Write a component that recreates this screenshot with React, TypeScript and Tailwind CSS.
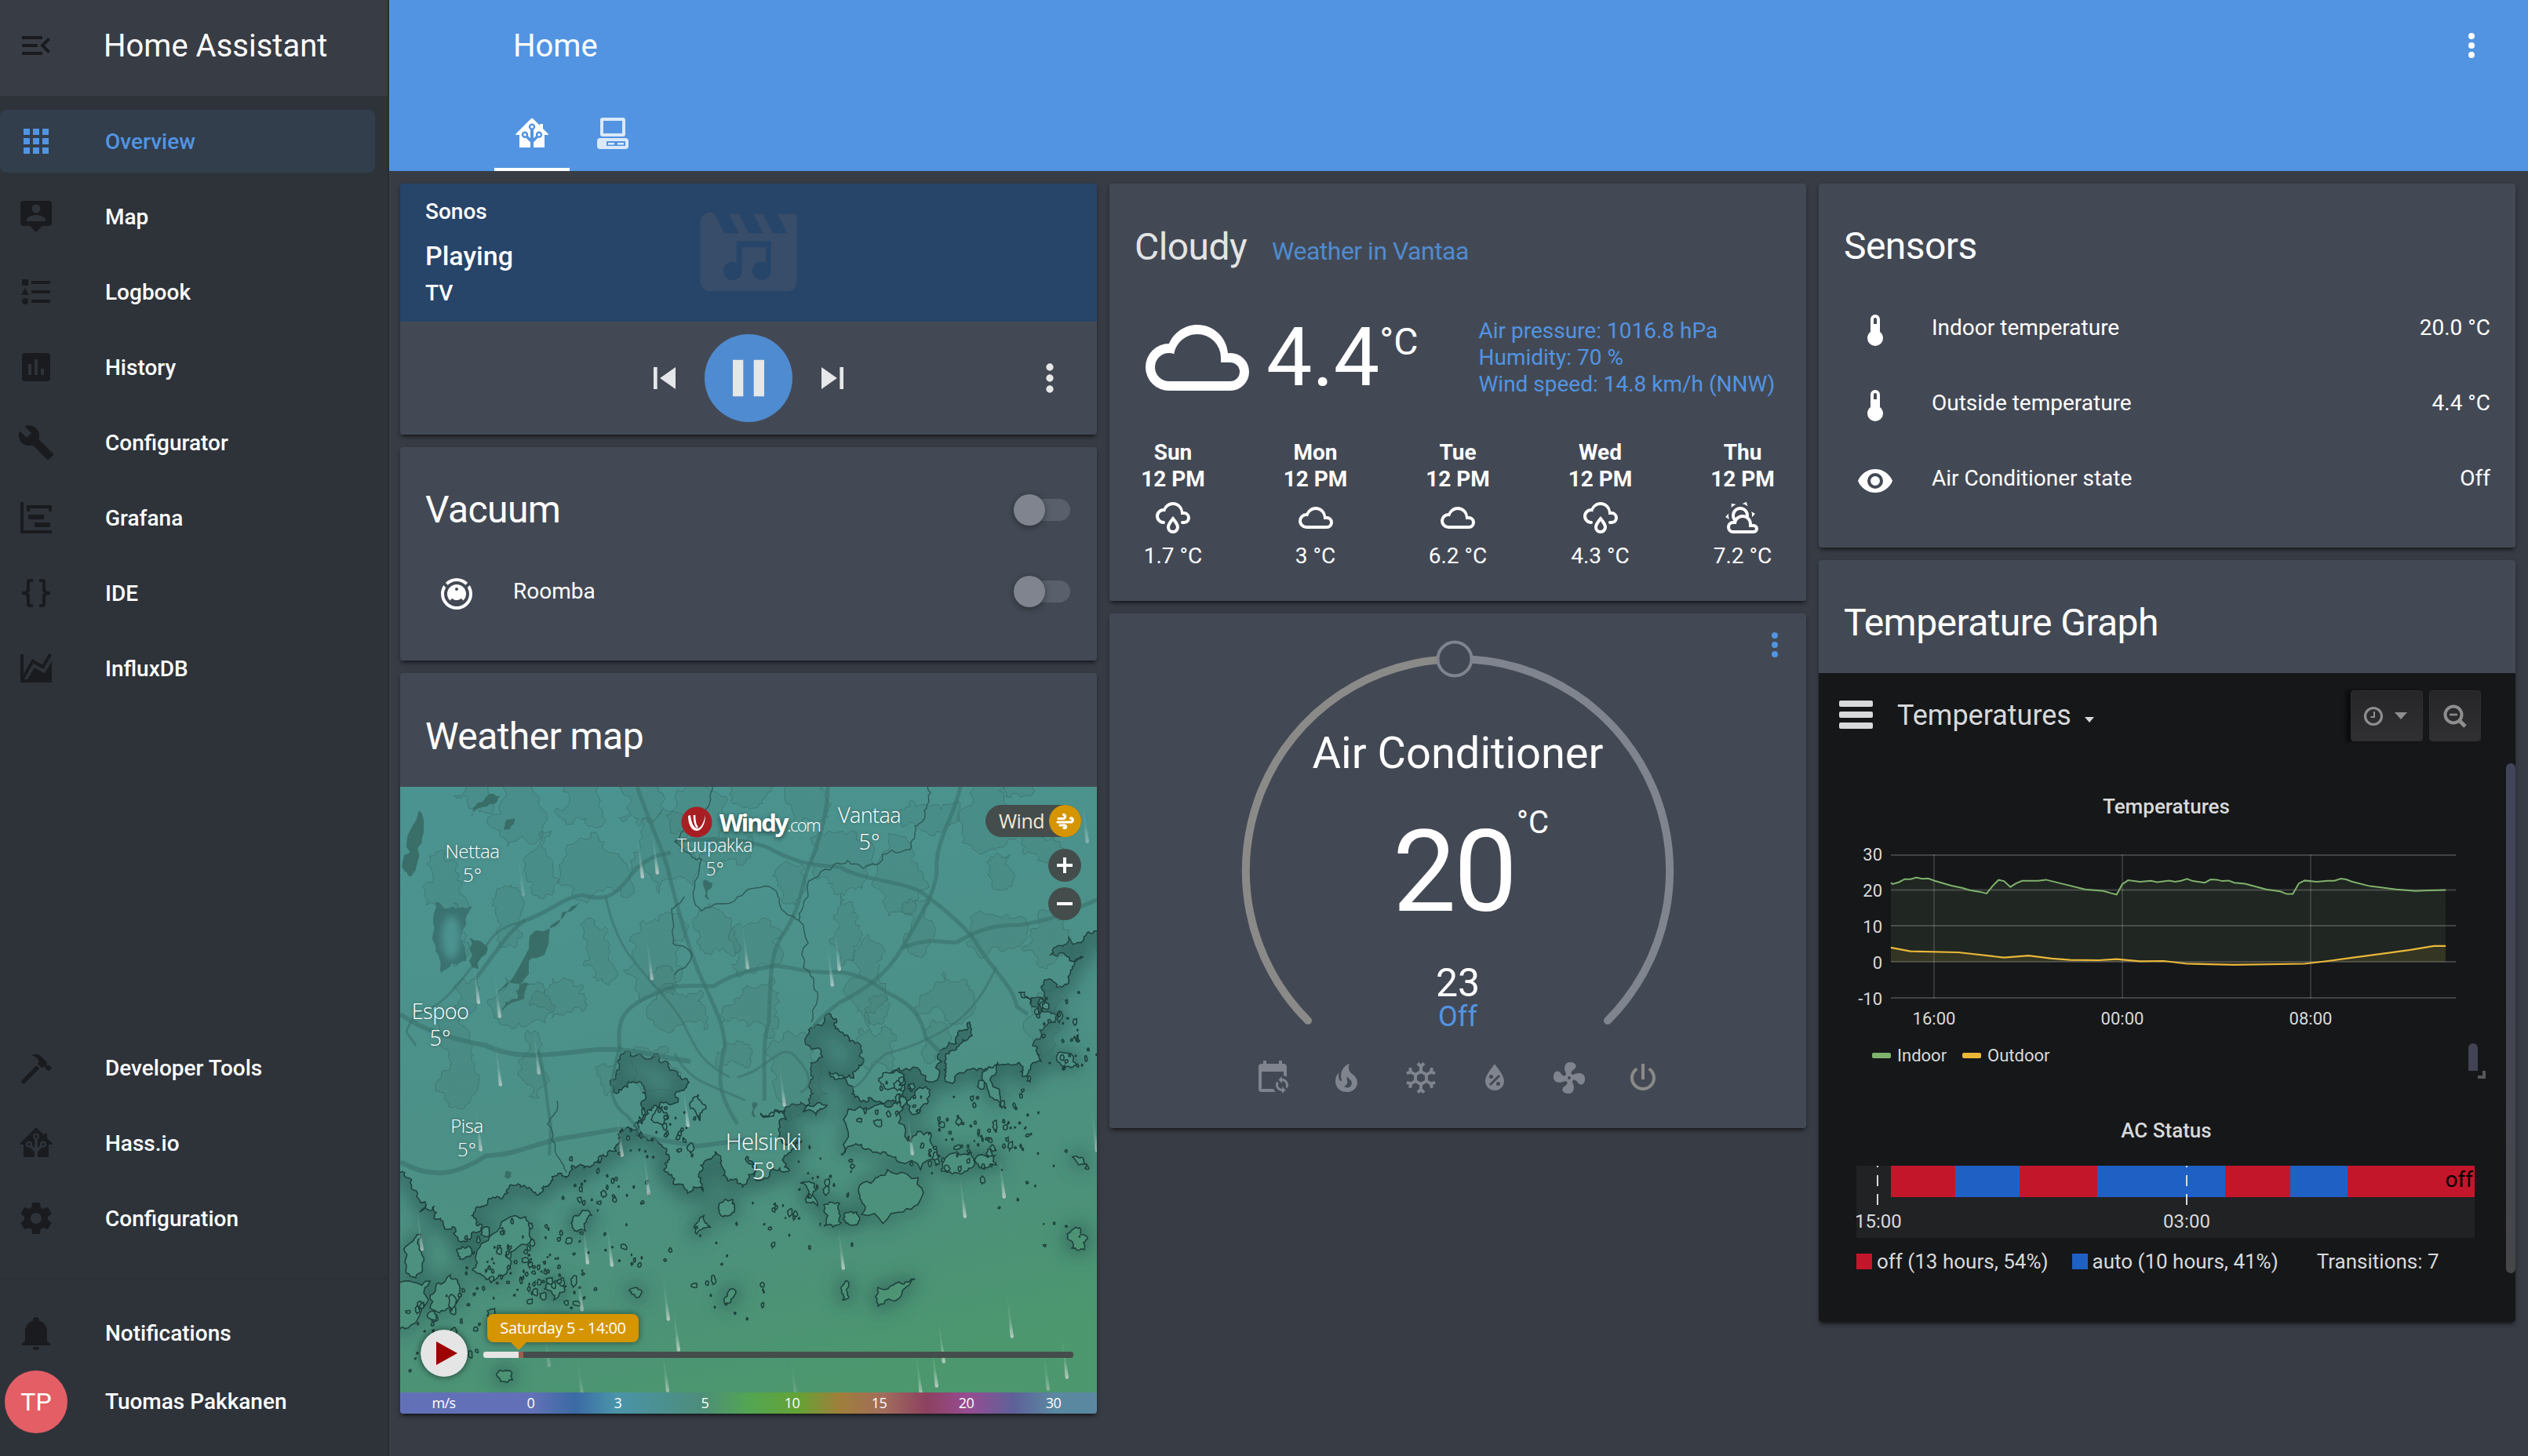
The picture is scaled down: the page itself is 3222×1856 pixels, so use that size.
import React from "react";

const P = {
  menuOpen: "M21,15.61L19.59,17L14.58,12L19.59,7L21,8.39L17.44,12L21,15.61M3,6H16V8H3V6M3,13V11H13V13H3M3,18V16H16V18H3Z",
  apps: "M16,20H20V16H16M16,14H20V10H16M10,8H14V4H10M16,8H20V4H16M10,14H14V10H10M4,14H8V10H4M4,20H8V16H4M10,20H14V16H10M4,8H8V4H4V8Z",
  map: "M20,2H4A2,2 0 0,0 2,4V16A2,2 0 0,0 4,18H8L12,22L16,18H20A2,2 0 0,0 22,16V4A2,2 0 0,0 20,2M12,4.3C13.5,4.3 14.7,5.5 14.7,7C14.7,8.5 13.5,9.7 12,9.7C10.5,9.7 9.3,8.5 9.3,7C9.3,5.5 10.5,4.3 12,4.3M18,15H6V14.1C6,12.1 10,11 12,11C14,11 18,12.1 18,14.1V15Z",
  logbook: "M5,9.5L7.5,14H2.5L5,9.5M3,4H7V8H3V4M5,20A2,2 0 0,0 7,18A2,2 0 0,0 5,16A2,2 0 0,0 3,18A2,2 0 0,0 5,20M9,5V7H21V5H9M9,19H21V17H9V19M9,13H21V11H9V13Z",
  history: "M9,17H7V10H9M13,17H11V7H13M17,17H15V13H17M19,3H5C3.89,3 3,3.89 3,5V19A2,2 0 0,0 5,21H19A2,2 0 0,0 21,19V5C21,3.89 20.1,3 19,3Z",
  wrench: "M22.7,19L13.6,9.9C14.5,7.6 14,4.9 12.1,3C10.1,1 7.1,0.6 4.7,1.7L9,6L6,9L1.6,4.7C0.4,7.1 0.9,10.1 2.9,12.1C4.8,14 7.5,14.5 9.8,13.6L18.9,22.7C19.3,23.1 19.9,23.1 20.3,22.7L22.6,20.4C23.1,20 23.1,19.3 22.7,19Z",
  timeline: "M2,2H4V20H22V22H2V2M7,10H17V13H7V10M11,15H21V18H11V15M6,4H22V8H20V6H8V8H6V4Z",
  braces: "M8,3A2,2 0 0,0 6,5V9A2,2 0 0,1 4,11H3V13H4A2,2 0 0,1 6,15V19A2,2 0 0,0 8,21H10V19H8V14A2,2 0 0,0 6,12A2,2 0 0,0 8,10V5H10V3M16,3A2,2 0 0,1 18,5V9A2,2 0 0,0 20,11H21V13H20A2,2 0 0,0 18,15V19A2,2 0 0,1 16,21H14V19H16V14A2,2 0 0,1 18,12A2,2 0 0,1 16,10V5H14V3H16Z",
  area: "M17.45,15.18L22,7.31V19L22,21H2V3H4V15.54L9.5,6L16,9.78L20.24,2.45L21.97,3.45L16.74,12.5L10.23,8.75L4.31,19H6.57L10.96,11.44L17.45,15.18Z",
  hammer: "M2.2,20.7L12.2,10.6L14.1,12.5L4.1,22.6L2.2,20.7M9.3,4.4C10.6,3.1 13,2.9 14.6,4.3L18.9,8.6L18.6,10.6L20.2,10.4L22,12.2L20,14.2L18,12.6V11.6L16.6,11.3L15.6,12.2L13,9.6L13.8,8.2C13.6,6.4 11.6,4.6 9.3,4.4Z",
  hass: "M21.8,13H20V21H13V17.67L15.79,14.88L16.5,15C17.66,15 18.6,14.06 18.6,12.9C18.6,11.74 17.66,10.8 16.5,10.8A2.1,2.1 0 0,0 14.4,12.9L14.5,13.61L13,15.13V9.65C13.66,9.29 14.1,8.6 14.1,7.8A2.1,2.1 0 0,0 12,5.7A2.1,2.1 0 0,0 9.9,7.8C9.9,8.6 10.34,9.29 11,9.65V15.13L9.5,13.61L9.6,12.9A2.1,2.1 0 0,0 7.5,10.8A2.1,2.1 0 0,0 5.4,12.9A2.1,2.1 0 0,0 7.5,15L8.21,14.88L11,17.67V21H4V13H2.25C1.83,13 1.42,13 1.42,12.79C1.43,12.57 1.85,12.15 2.28,11.72L11,3C11.33,2.67 11.67,2.33 12,2.33C12.33,2.33 12.67,2.67 13,3L17,7V6H19V9L21.78,11.78C22.18,12.18 22.59,12.59 22.6,12.8C22.6,13 22.2,13 21.8,13M7.5,12A0.9,0.9 0 0,1 8.4,12.9A0.9,0.9 0 0,1 7.5,13.8A0.9,0.9 0 0,1 6.6,12.9A0.9,0.9 0 0,1 7.5,12M16.5,12C17,12 17.4,12.4 17.4,12.9C17.4,13.4 17,13.8 16.5,13.8A0.9,0.9 0 0,1 15.6,12.9A0.9,0.9 0 0,1 16.5,12M12,6.9C12.5,6.9 12.9,7.3 12.9,7.8C12.9,8.3 12.5,8.7 12,8.7C11.5,8.7 11.1,8.3 11.1,7.8C11.1,7.3 11.5,6.9 12,6.9Z",
  cog: "M12,15.5A3.5,3.5 0 0,1 8.5,12A3.5,3.5 0 0,1 12,8.5A3.5,3.5 0 0,1 15.5,12A3.5,3.5 0 0,1 12,15.5M19.43,12.97C19.47,12.65 19.5,12.33 19.5,12C19.5,11.67 19.47,11.34 19.43,11L21.54,9.37C21.73,9.22 21.78,8.95 21.66,8.73L19.66,5.27C19.54,5.05 19.27,4.96 19.05,5.05L16.56,6.05C16.04,5.66 15.5,5.32 14.87,5.07L14.5,2.42C14.46,2.18 14.25,2 14,2H10C9.75,2 9.54,2.18 9.5,2.42L9.13,5.07C8.5,5.32 7.96,5.66 7.44,6.05L4.95,5.05C4.73,4.96 4.46,5.05 4.34,5.27L2.34,8.73C2.21,8.95 2.27,9.22 2.46,9.37L4.57,11C4.53,11.34 4.5,11.67 4.5,12C4.5,12.33 4.53,12.65 4.57,12.97L2.46,14.63C2.27,14.78 2.21,15.05 2.34,15.27L4.34,18.73C4.46,18.95 4.73,19.03 4.95,18.95L7.44,17.94C7.96,18.34 8.5,18.68 9.13,18.93L9.5,21.58C9.54,21.82 9.75,22 10,22H14C14.25,22 14.46,21.82 14.5,21.58L14.87,18.93C15.5,18.67 16.04,18.34 16.56,17.94L19.05,18.95C19.27,19.03 19.54,18.95 19.66,18.73L21.66,15.27C21.78,15.05 21.73,14.78 21.54,14.63L19.43,12.97Z",
  bell: "M21,19V20H3V19L5,17V11C5,7.9 7.03,5.17 10,4.29C10,4.19 10,4.1 10,4A2,2 0 0,1 12,2A2,2 0 0,1 14,4C14,4.1 14,4.19 14,4.29C16.97,5.17 19,7.9 19,11V17L21,19M14,21A2,2 0 0,1 12,23A2,2 0 0,1 10,21",
  dots: "M12,16A2,2 0 0,1 14,18A2,2 0 0,1 12,20A2,2 0 0,1 10,18A2,2 0 0,1 12,16M12,10A2,2 0 0,1 14,12A2,2 0 0,1 12,14A2,2 0 0,1 10,12A2,2 0 0,1 12,10M12,4A2,2 0 0,1 14,6A2,2 0 0,1 12,8A2,2 0 0,1 10,6A2,2 0 0,1 12,4Z",
  prev: "M6 6h2v12H6zm3.5 6l8.5 6V6z",
  next: "M6 18l8.5-6L6 6v12zM16 6v12h2V6h-2z",
  pause: "M6 19h4V5H6v14zm8-14v14h4V5h-4z",
  vacuum: "M12,2C14.65,2 17.19,3.06 19.07,4.93L17.65,6.35C16.15,4.85 14.12,4 12,4C9.88,4 7.84,4.84 6.35,6.35L4.93,4.93C6.81,3.06 9.35,2 12,2M3.66,6.5L5.11,7.94C4.39,9.17 4,10.57 4,12A8,8 0 0,0 12,20A8,8 0 0,0 20,12C20,10.57 19.61,9.17 18.88,7.94L20.34,6.5C21.42,8.12 22,10.04 22,12A10,10 0 0,1 12,22A10,10 0 0,1 2,12C2,10.04 2.58,8.12 3.66,6.5M12,6A6,6 0 0,1 18,12C18,13.59 17.37,15.12 16.24,16.24L14.83,14.83C14.08,15.58 13.06,16 12,16C10.94,16 9.92,15.58 9.17,14.83L7.76,16.24C6.63,15.12 6,13.59 6,12A6,6 0 0,1 12,6M12,8A1,1 0 0,0 11,9A1,1 0 0,0 12,10A1,1 0 0,0 13,9A1,1 0 0,0 12,8Z",
  cloudy: "M6,19A5,5 0 0,1 1,14A5,5 0 0,1 6,9C7,6.65 9.3,5 12,5C15.43,5 18.24,7.66 18.5,11.03L19,11A4,4 0 0,1 23,15A4,4 0 0,1 19,19H6M19,13H17V12A5,5 0 0,0 12,7C9.5,7 7.45,8.82 7.06,11.19C6.73,11.07 6.37,11 6,11A3,3 0 0,0 3,14A3,3 0 0,0 6,17H19A2,2 0 0,0 21,15A2,2 0 0,0 19,13Z",
  rainy: "M6,14.03A1,1 0 0,1 7,15.03C7,15.58 6.55,16.03 6,16.03C3.24,16.03 1,13.79 1,11.03C1,8.27 3.24,6.03 6,6.03C7,3.68 9.3,2.03 12,2.03C15.43,2.03 18.24,4.69 18.5,8.06L19,8.03A4,4 0 0,1 23,12.03C23,14.23 21.21,16.03 19,16.03H18C17.45,16.03 17,15.58 17,15.03C17,14.47 17.45,14.03 18,14.03H19A2,2 0 0,0 21,12.03A2,2 0 0,0 19,10.03H17V9.03C17,6.27 14.76,4.03 12,4.03C9.5,4.03 7.45,5.84 7.06,8.21C6.73,8.09 6.37,8.03 6,8.03A3,3 0 0,0 3,11.03A3,3 0 0,0 6,14.03M12,14.15C12.18,14.39 12.37,14.66 12.56,14.94C13,15.56 14,17.03 14,18C14,19.11 13.1,20 12,20A2,2 0 0,1 10,18C10,17.03 11,15.56 11.44,14.94C11.63,14.66 11.82,14.4 12,14.15M12,11.03L11.5,11.59C11.5,11.59 10.65,12.55 9.79,13.81C8.93,15.06 8,16.56 8,18A4,4 0 0,0 12,22A4,4 0 0,0 16,18C16,16.56 15.07,15.06 14.21,13.81C13.35,12.55 12.5,11.59 12.5,11.59",
  partly: "M12.74,5.47C15.1,6.5 16.35,9.03 15.92,11.46C17.19,12.56 18,14.19 18,16V16.17C18.31,16.06 18.65,16 19,16A3,3 0 0,1 22,19A3,3 0 0,1 19,22H6A4,4 0 0,1 2,18A4,4 0 0,1 6,14H6.27C5,12.45 4.6,10.24 5.5,8.26C6.72,5.5 9.97,4.24 12.74,5.47M11.93,7.3C10.16,6.5 8.09,7.31 7.31,9.07C6.85,10.09 6.93,11.22 7.41,12.13C8.5,10.83 10.16,10 12,10C12.7,10 13.38,10.12 14,10.34C13.94,9.06 13.18,7.86 11.93,7.3M13.55,3.64C13,3.4 12.45,3.23 11.88,3.12L14.37,1.82L15.27,4.71C14.76,4.29 14.19,3.93 13.55,3.64M6.09,4.44C5.6,4.79 5.17,5.19 4.8,5.63L4.91,2.82L7.87,3.5C7.25,3.71 6.65,4.03 6.09,4.44M18,9.71C17.91,9.12 17.78,8.55 17.59,8L19.97,9.5L17.92,11.73C18.03,11.08 18.05,10.4 18,9.71M3.04,11.3C3.11,11.9 3.24,12.47 3.43,13L1.06,11.5L3.1,9.28C3,9.93 2.97,10.61 3.04,11.3M19,18H16V16A4,4 0 0,0 12,12A4,4 0 0,0 8,16H6A2,2 0 0,0 4,18A2,2 0 0,0 6,20H19A1,1 0 0,0 20,19A1,1 0 0,0 19,18Z",
  thermo: "M17,17A5,5 0 0,1 12,22A5,5 0 0,1 7,17C7,15.36 7.79,13.91 9,13V5A3,3 0 0,1 12,2A3,3 0 0,1 15,5V13C16.21,13.91 17,15.36 17,17M12,4A1,1 0 0,0 11,5V8H13V5A1,1 0 0,0 12,4Z",
  eye: "M12,9A3,3 0 0,0 9,12A3,3 0 0,0 12,15A3,3 0 0,0 15,12A3,3 0 0,0 12,9M12,17A5,5 0 0,1 7,12A5,5 0 0,1 12,7A5,5 0 0,1 17,12A5,5 0 0,1 12,17M12,4.5C7,4.5 2.73,7.61 1,12C2.73,16.39 7,19.5 12,19.5C17,19.5 21.27,16.39 23,12C21.27,7.61 17,4.5 12,4.5Z",
  fire: "M17.66 11.2C17.43 10.9 17.15 10.64 16.89 10.38C16.22 9.78 15.46 9.35 14.82 8.72C13.33 7.26 13 4.85 13.95 3C13 3.23 12.17 3.75 11.46 4.32C8.87 6.4 7.85 10.07 9.07 13.22C9.11 13.32 9.15 13.42 9.15 13.55C9.15 13.77 9 13.97 8.8 14.05C8.57 14.15 8.33 14.09 8.14 13.93C8.08 13.88 8.04 13.83 8 13.76C6.87 12.33 6.69 10.28 7.45 8.64C5.78 10 4.87 12.3 5 14.47C5.06 14.97 5.12 15.47 5.29 15.97C5.43 16.57 5.7 17.17 6 17.7C7.08 19.43 8.95 20.67 10.96 20.92C13.1 21.19 15.39 20.8 17.03 19.32C18.86 17.66 19.5 15 18.56 12.72L18.43 12.46C18.22 12 17.66 11.2 17.66 11.2M14.5 17.5C14.22 17.74 13.76 18 13.4 18.1C12.28 18.5 11.16 17.94 10.5 17.28C11.69 17 12.4 16.12 12.61 15.23C12.78 14.43 12.46 13.77 12.33 13C12.21 12.26 12.23 11.63 12.5 10.94C12.69 11.32 12.89 11.7 13.13 12C13.9 13 15.11 13.44 15.37 14.8C15.41 14.94 15.43 15.08 15.43 15.23C15.46 16.05 15.1 16.95 14.5 17.5H14.5Z",
  snow: "M20.79,13.95L18.46,14.57L16.46,13.44V10.56L18.46,9.43L20.79,10.05L21.31,8.12L19.54,7.65L20,5.88L18.07,5.36L17.45,7.69L15.45,8.82L13,7.38V5.12L14.71,3.41L13.29,2L12,3.29L10.71,2L9.29,3.41L11,5.12V7.38L8.5,8.82L6.5,7.69L5.92,5.36L4,5.88L4.47,7.65L2.7,8.12L3.22,10.05L5.55,9.43L7.55,10.56V13.45L5.55,14.58L3.22,13.96L2.7,15.89L4.47,16.36L4,18.12L5.93,18.64L6.55,16.31L8.55,15.18L11,16.62V18.88L9.29,20.59L10.71,22L12,20.71L13.29,22L14.7,20.59L13,18.88V16.62L15.5,15.17L17.5,16.3L18.12,18.63L20,18.12L19.53,16.35L21.3,15.88L20.79,13.95M9.5,10.56L12,9.11L14.5,10.56V13.44L12,14.89L9.5,13.44V10.56Z",
  humidity: "M12,3.25C12,3.25 6,10 6,14C6,17.32 8.69,20 12,20A6,6 0 0,0 18,14C18,10 12,3.25 12,3.25M14.47,9.97L15.53,11.03L9.53,17.03L8.47,15.97M9.75,10A1.25,1.25 0 0,1 11,11.25A1.25,1.25 0 0,1 9.75,12.5A1.25,1.25 0 0,1 8.5,11.25A1.25,1.25 0 0,1 9.75,10M14.25,14.5A1.25,1.25 0 0,1 15.5,15.75A1.25,1.25 0 0,1 14.25,17A1.25,1.25 0 0,1 13,15.75A1.25,1.25 0 0,1 14.25,14.5Z",
  fan: "M12,11A1,1 0 0,0 11,12A1,1 0 0,0 12,13A1,1 0 0,0 13,12A1,1 0 0,0 12,11M12.5,2C17,2 17.11,5.57 14.75,6.75C13.76,7.24 13.32,8.29 13.13,9.22C13.61,9.42 14.03,9.73 14.35,10.13C18.05,8.13 22.03,8.92 22.03,12.5C22.03,17 18.46,17.1 17.28,14.73C16.78,13.74 15.72,13.3 14.79,13.11C14.59,13.59 14.28,14 13.88,14.34C15.87,18.03 15.08,22 11.5,22C7,22 6.91,18.42 9.27,17.24C10.25,16.75 10.69,15.71 10.89,14.79C10.4,14.59 9.97,14.27 9.65,13.87C5.96,15.85 2,15.07 2,11.5C2,7 5.56,6.89 6.74,9.26C7.24,10.25 8.29,10.68 9.22,10.87C9.41,10.39 9.73,9.97 10.14,9.65C8.15,5.96 8.94,2 12.5,2Z",
  power: "M16.56,5.44L15.11,6.89C16.84,7.94 18,9.83 18,12A6,6 0 0,1 12,18A6,6 0 0,1 6,12C6,9.83 7.16,7.94 8.88,6.88L7.44,5.44C5.36,6.88 4,9.28 4,12A8,8 0 0,0 12,20A8,8 0 0,0 20,12C20,9.28 18.64,6.88 16.56,5.44M13,3H11V13H13",
  calSync: "M18,11V12.5C21.19,12.5 23.09,16.05 21.33,18.71L20.24,17.62C21.06,15.96 19.85,14 18,14V15.5L15.75,13.25L18,11M18,22V20.5C14.81,20.5 12.91,16.95 14.67,14.29L15.76,15.38C14.94,17.04 16.15,19 18,19V17.5L20.25,19.75L18,22M19,3H18V1H16V3H8V1H6V3H5A2,2 0 0,0 3,5V19A2,2 0 0,0 5,21H14C13.36,20.45 12.86,19.77 12.5,19H5V8H19V10.59C19.71,10.7 20.39,10.94 21,11.31V5A2,2 0 0,0 19,3Z",
};

function Icon({ d, className = "size-12" }: { d: string; className?: string }) {
  return (
    <svg viewBox="0 0 24 24" className={"shrink-0 fill-current " + className}>
      <path fillRule="evenodd" d={d} />
    </svg>
  );
}

/* ---------- sidebar ---------- */

function NavItem({ icon, label, active = false }: { icon: string; label: string; active?: boolean }) {
  return (
    <div
      className={
        "flex h-20 w-[478px] items-center gap-16 rounded-lg pl-[22px] text-[28px] font-medium " +
        (active ? "bg-[#323e4c] text-[#5294e2]" : "text-white")
      }
    >
      <span className={active ? "text-[#5294e2]" : "text-[#191b1e]"}>
        <Icon d={icon} />
      </span>
      <span className="pt-px">{label}</span>
    </div>
  );
}

function Sidebar() {
  return (
    <aside className="flex w-[496px] shrink-0 flex-col border-r-2 border-[#282c33] bg-[#2e333a]">
      <div className="flex h-[123px] items-center gap-[62px] border-b border-[#33373f] bg-[#383c45] pb-[6px] pl-[22px] text-[40px] text-white">
        <span className="text-[#191b1e]">
          <Icon d={P.menuOpen} />
        </span>
        <span className="pt-px">Home Assistant</span>
      </div>
      <nav className="mt-[17px] flex flex-col gap-4">
        <NavItem icon={P.apps} label="Overview" active />
        <NavItem icon={P.map} label="Map" />
        <NavItem icon={P.logbook} label="Logbook" />
        <NavItem icon={P.history} label="History" />
        <NavItem icon={P.wrench} label="Configurator" />
        <NavItem icon={P.timeline} label="Grafana" />
        <NavItem icon={P.braces} label="IDE" />
        <NavItem icon={P.area} label="InfluxDB" />
      </nav>
      <div className="grow" />
      <nav className="mb-9 flex flex-col gap-4">
        <NavItem icon={P.hammer} label="Developer Tools" />
        <NavItem icon={P.hass} label="Hass.io" />
        <NavItem icon={P.cog} label="Configuration" />
      </nav>
      <div className="h-0.5 bg-[#292d34]" />
      <div className="flex flex-col gap-2 pt-7 pb-[29px]">
        <NavItem icon={P.bell} label="Notifications" />
        <div className="flex h-20 items-center gap-12 pl-1.5 text-[28px] font-medium text-white">
          <span className="flex size-20 items-center justify-center rounded-full bg-[#e45e65] text-[32px] font-normal">TP</span>
          Tuomas Pakkanen
        </div>
      </div>
    </aside>
  );
}

/* ---------- cards ---------- */

function Card({ className = "", children }: { className?: string; children: React.ReactNode }) {
  return (
    <section
      className={
        "relative flex w-[888px] flex-col overflow-hidden rounded-[4px] bg-[#434954] shadow-[0_4px_4px_rgba(0,0,0,0.22),0_2px_10px_rgba(0,0,0,0.14),0_6px_2px_-4px_rgba(0,0,0,0.3)] " +
        className
      }
    >
      {children}
    </section>
  );
}

function MediaCard() {
  return (
    <Card className="h-[320px]">
      <div className="relative h-[176px] bg-[#274469] pt-[15px] pl-8 font-medium text-white">
        <div className="text-[28px] leading-[42px]">Sonos</div>
        <div className="mt-[12px] text-[34px] leading-[46px]">Playing</div>
        <div className="mt-[4px] text-[28px] leading-[42px]">TV</div>
        <svg viewBox="0 0 24 24" className="absolute top-[14px] left-[370px] size-[148px] fill-[#374d69]">
          <path
            fillRule="evenodd"
            d="M18,4L20,8H17L15,4H13L15,8H12L10,4H8L10,8H7L5,4A2,2 0 0,0 2,6V18A2,2 0 0,0 4,20H20A2,2 0 0,0 22,18V4H18M16.6,9.6V16A1.9,1.9 0 1,1 15.6,14.1V10.9H10.6V16A1.9,1.9 0 1,1 9.5,14.1V9.6H16.6Z"
          />
        </svg>
      </div>
      <div className="relative flex h-36 items-center justify-center gap-[23px] text-[#e6e7e9]">
        <Icon d={P.prev} className="size-14" />
        <span className="flex size-28 items-center justify-center rounded-full bg-[#4f8bd0]">
          <Icon d={P.pause} className="size-20" />
        </span>
        <Icon d={P.next} className="size-14" />
        <span className="absolute right-8">
          <Icon d={P.dots} className="size-14" />
        </span>
      </div>
    </Card>
  );
}

function Toggle() {
  return (
    <span className="flex h-7 w-[68px] items-center rounded-full bg-[#59606b]">
      <span className="-ml-1 size-10 rounded-full bg-[#7f848e] shadow-[0_2px_8px_rgba(0,0,0,0.4)]" />
    </span>
  );
}

function VacuumCard() {
  return (
    <Card className="h-[272px] text-white">
      <div className="flex h-40 items-center justify-between pr-[34px] pl-8 text-[48px] tracking-[-0.012em]">
        Vacuum
        <Toggle />
      </div>
      <div className="flex h-12 items-center pr-[34px] pl-12 text-[28px]">
        <span className="mt-1.5">
          <Icon d={P.vacuum} />
        </span>
        <span className="ml-12 grow">Roomba</span>
        <Toggle />
      </div>
    </Card>
  );
}

/* ---------- map ---------- */

type Pt = [number, number];

function rng(seed: number) {
  let s = seed;
  return () => {
    s = (s * 1664525 + 1013904223) % 4294967296;
    return s / 4294967296;
  };
}

function fractal(points: Pt[], seed: number, rough: number, depth: number, closed = true): string {
  const rand = rng(seed);
  let pts = closed ? [...points, points[0]] : points;
  for (let k = 0; k < depth; k++) {
    const out: Pt[] = [];
    for (let i = 0; i < pts.length - 1; i++) {
      const [x1, y1] = pts[i];
      const [x2, y2] = pts[i + 1];
      const off = (rand() - 0.5) * rough;
      out.push(pts[i], [(x1 + x2) / 2 - (y2 - y1) * off, (y1 + y2) / 2 + (x2 - x1) * off]);
    }
    out.push(pts[pts.length - 1]);
    pts = out;
  }
  return "M" + pts.map((p) => p[0].toFixed(1) + "," + p[1].toFixed(1)).join("L") + (closed ? "Z" : "");
}

function blob(cx: number, cy: number, rx: number, ry: number, seed: number): Pt[] {
  const rand = rng(seed);
  const n = 7;
  return Array.from({ length: n }, (_, i) => {
    const a = (i / n) * Math.PI * 2;
    const k = 0.6 + rand() * 0.6;
    return [cx + Math.cos(a) * rx * k, cy + Math.sin(a) * ry * k] as Pt;
  });
}

const COAST: Pt[] = [
  [930, 184], [888, 184], [852, 192], [829, 214], [870, 217], [852, 247], [820, 249], [823, 274], [788, 262],
  [829, 287], [835, 300], [806, 330], [817, 350], [803, 377], [794, 357], [770, 354], [741, 359], [694, 371], [694, 350],
  [715, 327], [726, 300], [709, 327], [690, 350], [640, 362], [618, 381], [641, 389], [606, 401], [577, 386], [547, 364],
  [583, 360], [580, 327], [559, 310], [541, 294], [521, 314], [523, 360], [527, 391], [521, 404], [495, 408], [459, 416],
  [492, 424], [490, 455], [512, 451], [489, 478], [495, 490], [452, 499], [442, 471], [436, 511], [412, 495], [401, 465],
  [392, 475], [386, 515], [366, 518], [336, 488], [339, 461], [301, 444], [307, 424], [330, 408], [362, 387], [354, 364],
  [324, 340], [301, 342], [275, 364], [276, 391], [311, 382], [311, 413], [298, 438], [280, 451], [263, 471], [242, 485],
  [216, 491], [192, 505], [178, 518], [145, 508], [128, 525], [96, 537], [104, 558], [78, 580], [55, 558], [43, 535],
  [25, 542], [8, 498], [-30, 480],
];

const ISLANDS: Pt[][] = [
  [[621, 488], [665, 512], [641, 542], [588, 545], [586, 521], [606, 498]],
  [[565, 424], [612, 404], [641, 404], [647, 451], [676, 441], [688, 471], [635, 478], [612, 468], [588, 456], [565, 468]],
  [[694, 474], [728, 466], [732, 482], [718, 492], [690, 490]],
  [[732, 476], [758, 470], [760, 482], [740, 486]],
  [[540, 533], [560, 531], [562, 556], [540, 560]],
  [[566, 545], [582, 542], [584, 554], [568, 556]],
  [[376, 568], [388, 546], [396, 562], [378, 570]],
  [[609, 662], [609, 638], [640, 634], [656, 627], [638, 650]],
  [[96, 600], [118, 570], [160, 548], [166, 580], [140, 612], [110, 628], [92, 616]],
  [[38, 664], [46, 634], [64, 622], [76, 640], [62, 664]],
  [[-4, 690], [-4, 636], [38, 630], [36, 654], [10, 690]],
  [[218, 556], [232, 540], [244, 546], [236, 566], [222, 566]],
  [[184, 640], [200, 630], [212, 636], [196, 654]],
  [[408, 530], [424, 526], [426, 542], [412, 548]],
  [[320, 424], [334, 408], [340, 416], [336, 430]],
  [[370, 410], [380, 392], [390, 410], [382, 426]],
  [[514, 414], [520, 406], [544, 406], [530, 418]],
  [[742, 364], [760, 354], [760, 384], [770, 404], [750, 388]],
  [[610, 372], [640, 365], [644, 376], [622, 386]],
  [[646, 400], [670, 382], [672, 404], [650, 414]],
  [[510, 505], [528, 506], [532, 534], [518, 530]],
  [[6, 606], [12, 582], [26, 570], [30, 600], [20, 626]],
  [[72, 590], [86, 586], [90, 598], [76, 602]],
  [[562, 640], [570, 630], [572, 650], [564, 654]],
  [[838, 341], [852, 340], [862, 354], [852, 356]],
  [[850, 570], [866, 562], [876, 574], [872, 590], [856, 588]],
  [[856, 472], [868, 472], [876, 482], [866, 482]],
  [[414, 660], [424, 640], [428, 645], [418, 658]],
  [[126, 744], [142, 746], [144, 756], [128, 758]],
  [[292, 642], [300, 638], [308, 644], [300, 650]],
];

const CLUSTERS: [number, number, number, number, number, number][] = [
  [150, 600, 90, 60, 60, 6], [60, 690, 70, 70, 45, 8], [200, 630, 60, 40, 34, 6], [330, 440, 70, 40, 40, 5],
  [260, 510, 70, 40, 30, 6], [470, 560, 130, 50, 22, 4], [760, 430, 90, 60, 60, 5], [700, 470, 80, 40, 30, 6],
  [540, 500, 60, 50, 20, 5], [820, 540, 70, 90, 12, 4], [420, 640, 60, 60, 14, 5], [640, 400, 60, 40, 24, 6],
  [856, 330, 40, 40, 24, 5], [280, 590, 80, 50, 16, 5], [830, 290, 40, 40, 16, 6],
];

const ROADS: { d: string; w: number }[] = [
  { w: 5, d: "M302,0C316,40 330,70 340,100C352,150 366,200 380,235C400,280 412,300 414,330C404,370 404,390 430,430" },
  { w: 5, d: "M96,245C116,220 140,180 160,170C190,160 210,140 232,138C262,146 272,140 290,118C310,90 330,86 345,84" },
  { w: 5, d: "M350,70C400,64 440,66 470,78C510,100 530,100 560,102C590,120 640,120 664,134C700,160 720,180 732,195C750,230 780,250 786,280L800,290" },
  { w: 5, d: "M545,0C545,40 530,80 518,108C510,140 506,160 490,185C470,210 472,250 470,300C460,330 466,370 464,400" },
  { w: 5, d: "M714,0C706,40 680,70 684,110C680,140 660,170 640,205C620,240 590,260 560,275C540,290 530,300 524,310" },
  { w: 6, d: "M0,290C30,310 60,320 110,330C150,350 200,340 240,336C290,330 330,345 370,350" },
  { w: 6, d: "M0,478C40,500 70,496 110,470C150,470 180,450 220,446L280,436L330,450L380,458L440,450" },
  { w: 5, d: "M280,336C276,300 280,280 330,262C350,250 380,254 400,254C420,240 450,232 480,228C510,232 520,238 560,236C590,240 604,250 620,262C650,276 664,290 670,320L690,340" },
  { w: 5, d: "M640,205C680,190 690,200 710,198C740,180 760,176 790,176C830,170 850,160 888,144" },
  { w: 3, d: "M262,140C268,170 280,200 296,220C320,250 350,280 360,300C376,330 380,350 420,370" },
  { w: 4, d: "M176,336C186,370 186,400 192,430L190,470" },
  { w: 4, d: "M280,330C270,370 260,400 290,420L306,440" },
  { w: 3, d: "M760,230C750,250 740,270 720,290C700,310 660,330 620,340C590,360 600,380 560,390" },
  { w: 3, d: "M20,330C10,310 0,320 20,290C60,280 80,240 100,220C120,180 130,180 160,170" },
  { w: 3, d: "M430,370C470,360 480,330 500,340C520,360 530,380 510,390" },
  { w: 3, d: "M350,340C370,380 400,380 440,400" },
];

const STREAKS: [number, number, number][] = [
  [309, 117, 1], [328, 112, 1], [157, 140, 0.35], [443, 233, 0.8], [560, 235, 0.9], [551, 255, 0.9], [321, 247, 0.8], [100, 277, 1],
  [127, 295, 0.9], [128, 382, 0.9], [177, 367, 0.8], [490, 408, 0.9], [367, 434, 0.9], [103, 465, 0.9], [283, 472, 0.9],
  [317, 521, 0.9], [653, 470, 0.9], [770, 525, 1], [720, 550, 1], [565, 616, 1], [270, 612, 1], [239, 609, 1], [342, 681, 1],
  [355, 720, 1], [780, 703, 1], [693, 735, 1], [684, 766, 1], [850, 755, 1], [232, 669, 0.8], [28, 592, 0.8], [341, 772, 0.8],
  [664, 776, 0.9], [190, 740, 0.4], [232, 776, 0.4], [826, 770, 0.6], [504, 776, 0.3], [876, 72, 0.6], [888, 466, 0.7],
];

const islandPaths = ISLANDS.map((p, i) => fractal(p, 31 + i * 7, 0.55, 3));
const isletPaths = CLUSTERS.flatMap(([cx, cy, rx, ry, n, r], c) => {
  const rand = rng(c * 991 + 5);
  return Array.from({ length: n }, (_, i) => {
    const x = cx + (rand() + rand() - 1) * rx;
    const y = cy + (rand() + rand() - 1) * ry;
    const s = 0.8 + rand() * rand() * r;
    return fractal(blob(x, y, s * (0.6 + rand() * 0.5), s * (0.7 + rand() * 0.8), i + 3), i + 9, 0.5, 1);
  });
});
const mainlandPath = fractal(COAST, 77, 0.75, 4, false) + "L-30,-30L930,-30Z";

const patchRand = rng(4242);
const patchPaths = Array.from({ length: 48 }, (_, i) => {
  const col = i % 10;
  const row = Math.floor(i / 10);
  const x = 60 + col * 84 + (patchRand() - 0.5) * 80;
  const y = 20 + row * 82 + (patchRand() - 0.5) * 60;
  return fractal(blob(x, y, 14 + patchRand() * 34, 16 + patchRand() * 46, i + 50), i + 60, 0.8, 3);
});

const LAKES: Pt[][] = [
  [[24, 30], [30, 50], [22, 78], [14, 114], [6, 108], [12, 84], [8, 74]],
  [[128, 12], [118, 22], [104, 26], [92, 42], [96, 24], [110, 12]],
  [[146, 40], [140, 54], [132, 54], [134, 44]],
  [[231, 145], [212, 160], [190, 186], [184, 214], [164, 222], [124, 262], [160, 214], [164, 200], [192, 180], [206, 160]],
  [[88, 192], [112, 206], [100, 232], [88, 222]],
  [[152, 252], [168, 250], [158, 270], [130, 286], [134, 274], [150, 270]],
  [[386, 120], [398, 122], [394, 144], [388, 140]],
  [[450, 402], [456, 404], [454, 422], [448, 418]],
  [[134, 490], [142, 492], [138, 500], [132, 498]],
];

const labelShadow = "[text-shadow:0_0_4px_rgba(0,0,0,0.35)]";

const LABELS: { name: string; x: number; y: number; y2: number; size: string }[] = [
  { name: "Nettaa", x: 92, y: 82, y2: 112, size: "text-[24px]" },
  { name: "Tuupakka", x: 401, y: 74, y2: 104, size: "text-[23px]" },
  { name: "Vantaa", x: 598, y: 36, y2: 70, size: "text-[27px]" },
  { name: "Espoo", x: 51, y: 286, y2: 320, size: "text-[27px]" },
  { name: "Pisa", x: 85, y: 432, y2: 462, size: "text-[24px]" },
  { name: "Helsinki", x: 463, y: 452, y2: 489, size: "text-[29px]" },
];

function WindMap() {
  return (
    <div className={'relative h-[772px] overflow-hidden font-["Open_Sans",sans-serif] text-white'}>
      <svg viewBox="0 0 888 772" className="block h-[772px] w-[888px]">
        <defs>
          <linearGradient id="base" gradientUnits="userSpaceOnUse" x1="300" y1="0" x2="480" y2="772">
            <stop offset="0" stopColor="#4b9390" />
            <stop offset="0.5" stopColor="#4c9087" />
            <stop offset="0.8" stopColor="#4c9179" />
            <stop offset="1" stopColor="#4c976e" />
          </linearGradient>
          <linearGradient id="streak" x1="0" y1="0" x2="0" y2="1">
            <stop offset="0" stopColor="#fff" stopOpacity="0" />
            <stop offset="0.6" stopColor="#d9e6e0" stopOpacity="0.16" />
            <stop offset="1" stopColor="#e6e0e2" stopOpacity="0.7" />
          </linearGradient>
          <filter id="soft" x="-20%" y="-20%" width="140%" height="140%">
            <feGaussianBlur stdDeviation="11" />
          </filter>
          <filter id="soft2" x="-50%" y="-50%" width="200%" height="200%">
            <feGaussianBlur stdDeviation="5" />
          </filter>
        </defs>
        <rect width="888" height="772" fill="url(#base)" />
        <g filter="url(#soft)" fill="none" stroke="#2d5f58" strokeOpacity="0.75" strokeWidth="20">
          <path d={mainlandPath} />
          {islandPaths.map((d, i) => (
            <path key={i} d={d} strokeWidth="11" />
          ))}
        </g>
        <path d={mainlandPath} fill="url(#base)" stroke="#1e3f3b" strokeWidth="1.5" />
        <g fill="#426f6c" fillOpacity="0.15" stroke="#35615d" strokeOpacity="0.5" strokeWidth="1">
          {patchPaths.map((d, i) => (
            <path key={i} d={d} />
          ))}
        </g>
        <g fill="none" stroke="#3a716c" strokeOpacity="0.6">
          {ROADS.map((r, i) => (
            <path key={i} d={r.d} strokeWidth={r.w} />
          ))}
        </g>
        <g fill="none" stroke="#2c5753" strokeWidth="1.3">
          <path d={fractal([[398, 0], [388, 30], [350, 70], [362, 82], [384, 92], [376, 150], [384, 158], [430, 140], [470, 127], [484, 150], [508, 170], [514, 230], [532, 262], [524, 300]], 5, 0.35, 3, false)} />
          <path d={fractal([[672, 0], [668, 30], [656, 50], [650, 80], [610, 98], [590, 104], [570, 94], [548, 106], [520, 140], [508, 170]], 8, 0.45, 3, false)} />
          <path d={fractal([[362, 140], [346, 156], [348, 200], [372, 214], [350, 240]], 12, 0.3, 3, false)} />
          <path d={fractal([[200, 400], [188, 430], [200, 470], [212, 492]], 14, 0.4, 3, false)} />
        </g>
        <g fill="#35655f" fillOpacity="0.8">
          {LAKES.map((p, i) => (
            <path key={i} d={fractal(p, i + 100, 0.5, 2)} />
          ))}
        </g>
        <path d={fractal([[45, 147], [58, 155], [92, 152], [84, 175], [80, 200], [84, 222], [52, 237], [44, 200]], 3, 0.4, 3)} fill="#3a7270" />
        <ellipse cx="65" cy="192" rx="12" ry="28" fill="#4b9390" filter="url(#soft2)" />
        <g fill="url(#base)" stroke="#1e3f3b" strokeWidth="1.5">
          {islandPaths.map((d, i) => (
            <path key={i} d={d} />
          ))}
          {isletPaths.map((d, i) => (
            <path key={"i" + i} d={d} />
          ))}
        </g>
        <g fill="url(#streak)">
          {STREAKS.map(([x, y, o], i) => (
            <path key={i} opacity={o} d={`M${x - 7},${y - 58}L${x + 2},${y - 3}A2.200,2.200 0 0,1 ${x - 2.4},${y - 2}Z`} />
          ))}
        </g>
      </svg>

      {LABELS.map((l) => (
        <React.Fragment key={l.name}>
          <span
            className={"absolute -translate-x-1/2 -translate-y-1/2 font-light whitespace-nowrap tracking-[-0.02em] " + labelShadow + " " + l.size}
            style={{ left: l.x, top: l.y }}
          >
            {l.name}
          </span>
          <span
            className={"absolute -translate-x-1/2 -translate-y-1/2 font-light " + labelShadow + " " + l.size}
            style={{ left: l.x, top: l.y2 }}
          >
            5°
          </span>
        </React.Fragment>
      ))}

      <div className="absolute top-[22px] left-[358px] flex items-center">
        <svg viewBox="0 0 40 40" className="size-10">
          <circle cx="20" cy="20" r="19.5" fill="#a81e22" />
          <path d="M9,12C9,22 13,31 20,31C26,31 31,23 31,11C29,21 25,28 21,28C16,28 13,20 12,11Z" fill="#fff" />
          <path d="M17,11C17,18 18,24 21,27" fill="none" stroke="#fff" strokeWidth="2.6" />
        </svg>
        <span className="ml-[9px] text-[31px] leading-10 font-bold tracking-[-0.07em] [text-shadow:0_2px_6px_rgba(0,0,0,0.6)]">Windy</span>
        <span className="mt-1.5 text-[22px] leading-10 font-light tracking-[-0.07em]">.com</span>
      </div>

      <div className="absolute top-[23px] right-5 flex h-[41px] w-[122px] items-center justify-between rounded-full bg-[#444d4b] pl-[17px]">
        <span className="text-[25px] tracking-[-0.02em] text-[#f5ead6]">Wind</span>
        <svg viewBox="0 0 41 41" className="size-[41px]">
          <circle cx="20.5" cy="20.5" r="20.5" fill="#d49500" />
          <g fill="none" stroke="#fff" strokeWidth="3.2" strokeLinecap="round">
            <path d="M12,17.500H18C21,17.500 21.500,13 18.500,12.500M11,22H27C31.500,22 31,16 27.500,17M14,26H20C22.500,26.500 22,30 19,29.500" />
          </g>
        </svg>
      </div>
      <div className="absolute top-[79px] right-5 flex flex-col gap-[7px]">
        {["M21,11V31M11,21H31", "M11,21H31"].map((d) => (
          <svg key={d} viewBox="0 0 42 42" className="size-[42px]">
            <circle cx="21" cy="21" r="21" fill="#444d4b" />
            <path d={d} stroke="#fff" strokeWidth="4" />
          </svg>
        ))}
      </div>

      <div className="absolute top-[672px] left-[111px] flex h-[36px] w-[193px] items-center justify-center rounded-[8px] bg-[#d49500] text-[20px] tracking-[-0.02em] shadow-[0_0_8px_rgba(0,0,0,0.5)]">
        Saturday 5 - 14:00
        <svg viewBox="0 0 20 10" className="absolute top-[36px] left-[30px] h-2.5 w-5 fill-[#d49500]">
          <path d="M0,0H20L10,10Z" />
        </svg>
      </div>
      <div className="absolute top-[720px] left-[106px] flex h-2 w-[752px] overflow-hidden rounded-[3px] bg-[#444d4b]">
        <span className="w-[45px] bg-[#e5e5e5]" />
        <span className="w-[6px] bg-[#9b5f50]" />
      </div>
      <svg viewBox="0 0 60 60" className="absolute top-[692px] left-[26px] size-[60px] rounded-full shadow-[0_0_8px_rgba(0,0,0,0.6)]">
        <circle cx="30" cy="30" r="30" fill="#e5e5e5" />
        <path d="M20,15V45L47,30Z" fill="#9d0300" />
      </svg>
    </div>
  );
}

function MapCard() {
  return (
    <Card className="h-[944px]">
      <div className="flex h-[145px] items-center pt-4 pl-8 text-[48px] tracking-[-0.012em] text-white">Weather map</div>
      <WindMap />
      <div className='grid h-[27px] grid-cols-8 bg-[linear-gradient(90deg,#6271b7_19%,#3b6aa5_25%,#4a94a9_31%,#4d8d7b_43%,#53a553_50%,#63a335_57%,#9f7f3a_63%,#a16c5c_69.500%,#8d4160_75.500%,#974c92_81.500%,#5e6199_88%,#5b88a1_94%)] text-center font-["Open_Sans",sans-serif] text-[18px] leading-[27px] tracking-[-0.03em] text-white'>
        {["m/s", "0", "3", "5", "10", "15", "20", "30"].map((t) => (
          <span key={t}>{t}</span>
        ))}
      </div>
    </Card>
  );
}

/* ---------- weather ---------- */

function WeatherCard() {
  const days: [string, string, string][] = [
    ["Sun", P.rainy, "1.7 °C"],
    ["Mon", P.cloudy, "3 °C"],
    ["Tue", P.cloudy, "6.2 °C"],
    ["Wed", P.rainy, "4.3 °C"],
    ["Thu", P.partly, "7.2 °C"],
  ];
  return (
    <Card className="h-[532px] text-white">
      <div className="mt-[41px] flex h-[80px] items-baseline gap-8 pl-8 leading-[80px]">
        <span className="text-[48px] tracking-[-0.012em] text-[#e3e4e5]">Cloudy</span>
        <span className="text-[32px] tracking-[-0.016em] text-[#4f8bd0]">Weather in Vantaa</span>
      </div>
      <div className="mt-[29px] flex h-36 items-center pl-[40px]">
        <Icon d={P.cloudy} className="size-36" />
        <span className="ml-[16px] text-[104px] leading-none">4.4</span>
        <span className="mb-[40px] text-[48px] leading-none">°C</span>
        <div className="ml-[77px] text-[28px] leading-[34px] whitespace-nowrap text-[#5294e2]">
          <div>Air pressure: 1016.8 hPa</div>
          <div>Humidity: 70 %</div>
          <div>Wind speed: 14.8 km/h (NNW)</div>
        </div>
      </div>
      <div className="mt-[32px] flex justify-between px-[40px] text-center text-[28px] leading-[34px]">
        {days.map(([d, icon, t]) => (
          <div key={d} className="flex w-[82px] flex-col items-center whitespace-nowrap">
            <span className="font-bold">{d}</span>
            <span className="font-bold">12 PM</span>
            <span className="my-[8px]">
              <Icon d={icon} />
            </span>
            <span>{t}</span>
          </div>
        ))}
      </div>
    </Card>
  );
}

function ClimateCard() {
  const modes = [P.calSync, P.fire, P.snow, P.humidity, P.fan, P.power];
  return (
    <Card className="h-[656px] text-white">
      <svg viewBox="0 0 888 656" className="absolute inset-0 size-full">
        <g fill="none" strokeWidth="10" strokeLinecap="round">
          <path d="M253,519A270,270 0 0,1 444,58" stroke="#8a8a88" />
          <path d="M444,58A270,270 0 0,1 635,519" stroke="#7f848e" />
        </g>
        <circle cx="440" cy="58" r="21.500" fill="#434954" stroke="#7f848e" strokeWidth="4" />
      </svg>
      <span className="absolute top-4 right-4 text-[#5294e2]">
        <Icon d={P.dots} />
      </span>
      <div className="relative flex flex-col items-center">
        <div className="mt-[144px] text-[56px] leading-[68px]">Air Conditioner</div>
        <div className="relative mt-[28px] -ml-[10px] text-[144px] leading-[180px] tracking-[-0.02em]">
          20
          <span className="absolute top-[-13px] left-full ml-0.5 text-[40px] leading-[80px] tracking-normal">°C</span>
        </div>
        <div className="mt-[26px] text-[50px] leading-[50px]">23</div>
        <div className="text-[36px] leading-[36px] text-[#5294e2]">Off</div>
        <div className="mt-[36px] flex gap-[46.500px] text-[#7f848e]">
          {modes.map((m, i) => (
            <span key={i} className={i === 5 ? "text-[#8a8a88]" : ""}>
              <Icon d={m} />
            </span>
          ))}
        </div>
      </div>
    </Card>
  );
}

/* ---------- sensors ---------- */

function SensorsCard() {
  const rows: [string, string, string][] = [
    [P.thermo, "Indoor temperature", "20.0 °C"],
    [P.thermo, "Outside temperature", "4.4 °C"],
    [P.eye, "Air Conditioner state", "Off"],
  ];
  return (
    <Card className="h-[464px] text-white">
      <div className="flex h-40 items-center pl-8 text-[48px] tracking-[-0.012em]">Sensors</div>
      <div className="-mt-4 flex flex-col gap-4">
        {rows.map(([icon, name, value]) => (
          <div key={name} className="flex h-20 items-center pr-8 pl-12 text-[28px]">
            <span className="mt-1.5">
              <Icon d={icon} />
            </span>
            <span className="ml-12 grow">{name}</span>
            <span>{value}</span>
          </div>
        ))}
      </div>
    </Card>
  );
}

/* ---------- grafana panel ---------- */

const INDOOR =
  "172,828 176,833 190,826 202,815 215,815 228,809 241,814 254,812 268,821 305,839 328,847 345,856 368,862 382,868 395,840 408,818 420,822 434,844 446,831 460,821 495,821 512,817 550,833 598,853 638,859 655,867 667,872 679,834 692,819 718,825 742,821 756,826 782,820 795,825 808,821 821,814 834,822 860,828 873,816 887,817 898,822 912,820 925,828 948,832 995,853 1025,860 1040,870 1053,870 1066,831 1079,820 1105,825 1130,821 1144,821 1158,813 1170,816 1182,824 1222,841 1250,846 1280,853 1322,859 1340,857 1388,855";
const OUTDOOR =
  "172,1068 215,1082 320,1086 420,1105 474,1098 525,1109 565,1114 628,1115 667,1111 718,1119 770,1118 821,1128 925,1132 1079,1128 1130,1118 1182,1106 1310,1077 1362,1062 1388,1062";

function toPx(points: string) {
  return points
    .split(" ")
    .map((p) => {
      const [x, y] = p.split(",").map(Number);
      return ((x - 14) * 0.5816).toFixed(1) + "," + (y * 0.3444 - 230).toFixed(1);
    })
    .join(" ");
}

function TemperatureChart() {
  const indoor = toPx(INDOOR);
  const outdoor = toPx(OUTDOOR);
  return (
    <svg viewBox="0 0 888 260" className="block h-[260px] w-[888px] font-[Roboto,sans-serif] text-[22px]">
      <polygon points={`92,156 ${indoor} 799,156`} fill="#7eb26d" fillOpacity="0.1" />
      <polygon points={`92,156 ${outdoor} 799,156`} fill="#eab839" fillOpacity="0.1" />
      <g stroke="#c8c8c8" strokeOpacity="0.25" strokeWidth="2">
        {[20, 64.5, 110, 156, 202].map((y) => (
          <path key={y} d={`M92,${y}H812`} />
        ))}
        {[147, 387, 627].map((x) => (
          <path key={x} d={`M${x},19V203`} strokeWidth="1.500" />
        ))}
      </g>
      <polyline points={indoor} fill="none" stroke="#7eb26d" strokeWidth="2" />
      <polyline points={outdoor} fill="none" stroke="#eab839" strokeWidth="2.200" />
      <g fill="#d8d9da">
        {["30", "20", "10", "0", "-10"].map((t, i) => (
          <text key={t} x="81" y={26.5 + i * 46} textAnchor="end">
            {t}
          </text>
        ))}
        {["16:00", "00:00", "08:00"].map((t, i) => (
          <text key={t} x={147 + i * 240} y="236" textAnchor="middle">
            {t}
          </text>
        ))}
      </g>
    </svg>
  );
}

function StatusBar() {
  const segs: [string, string][] = [
    ["bg-[#c4162a]", "w-[82px]"],
    ["bg-[#1f60c4]", "w-[82px]"],
    ["bg-[#c4162a]", "w-[99px]"],
    ["bg-[#1f60c4]", "w-[163px]"],
    ["bg-[#c4162a]", "w-[83px]"],
    ["bg-[#1f60c4]", "w-[73px]"],
    ["bg-[#c4162a]", "grow"],
  ];
  return (
    <div className="relative ml-12 h-[92px] w-[788px] overflow-hidden bg-[#212224]">
      <div className="flex h-10 pl-[44px]">
        {segs.map(([c, w], i) => (
          <span key={i} className={c + " " + w + " pr-0.5 text-right text-[28px] leading-9 text-black"}>
            {i === 6 ? "off" : ""}
          </span>
        ))}
      </div>
      <svg viewBox="0 0 788 52" className="absolute top-0 left-0 h-[52px] w-[788px]">
        <path d="M27,0V2M27,12V26M27,36V50M421,0V2M421,12V26M421,36V50" stroke="#d8d9da" strokeWidth="2" />
      </svg>
      <span className="absolute top-[56px] left-0 -ml-[2px] text-[24px] leading-[30px] text-[#d8d9da]">15:00</span>
      <span className="absolute top-[56px] left-[421px] -translate-x-1/2 text-[24px] leading-[30px] text-[#d8d9da]">03:00</span>
    </div>
  );
}

function GraphCard() {
  const btn = "flex h-[65px] items-center rounded-[4px] border border-[#2f2f32] bg-gradient-to-b from-[#262628] to-[#303033] text-[#8e8e8e] ";
  return (
    <Card className="h-[971px] text-white">
      <div className="flex h-36 items-center pt-4 pl-8 text-[48px] tracking-[-0.012em]">Temperature Graph</div>
      <div className="relative flex grow flex-col bg-[#161719] text-[#d8d9da]">
        <div className="mt-[22px] flex h-[65px] items-center pr-11 pl-[26px]">
          <span className="flex flex-col gap-[6px] pb-1">
            <span className="h-2 w-[43px] rounded-[2px] bg-current" />
            <span className="h-2 w-[43px] rounded-[2px] bg-current" />
            <span className="h-2 w-[43px] rounded-[2px] bg-current" />
          </span>
          <span className="ml-[31px] pb-0.5 text-[36px]">Temperatures</span>
          <svg viewBox="0 0 12 7" className="mt-2.5 ml-[17px] h-[7px] w-3 fill-current">
            <path d="M0,0H12L6,7Z" />
          </svg>
          <span className="grow" />
          <div className={btn + "w-[92px] gap-[14px] pl-[15px] shadow-[-6px_0_4px_rgba(0,0,0,0.5)]"}>
            <svg viewBox="0 0 26 26" className="size-[26px] fill-none stroke-current">
              <circle cx="13" cy="13" r="10.500" strokeWidth="3.200" />
              <path d="M14,7V14H9.500" strokeWidth="2" />
            </svg>
            <svg viewBox="0 0 16 9" className="h-[9px] w-4 fill-current">
              <path d="M0,0H16L8,9Z" />
            </svg>
          </div>
          <div className={btn + "ml-2 w-[66px] justify-center"}>
            <svg viewBox="0 0 32 32" className="size-8 fill-none stroke-current">
              <circle cx="14" cy="14" r="10.500" strokeWidth="4" />
              <path d="M9,14H19" strokeWidth="2.500" />
              <path d="M21,21L29,29" strokeWidth="5" />
            </svg>
          </div>
        </div>
        <div className="mt-[65px] text-center text-[26px] leading-9 font-medium">
          <span className="pr-0.5">Temperatures</span>
        </div>
        <div className="mt-[24px]">
          <TemperatureChart />
        </div>
        <div className="-mt-px flex h-8 items-center pl-[68px] text-[22px]">
          <span className="mr-2 h-[7px] w-6 rounded-[2px] bg-[#7eb26d]" />
          Indoor
          <span className="mr-2 ml-5 h-[7px] w-6 rounded-[2px] bg-[#eab839]" />
          Outdoor
        </div>
        <div className="mt-[62px] pr-0.5 text-center text-[26px] leading-9 font-medium">AC Status</div>
        <div className="mt-[27px]">
          <StatusBar />
        </div>
        <div className="flex items-center pt-[12px] pl-12 text-[26px] leading-9 whitespace-nowrap">
          <span className="mr-1.5 size-5 bg-[#c4162a]" />
          off (13 hours, 54%)
          <span className="mr-1.5 ml-[30px] size-5 bg-[#1f60c4]" />
          auto (10 hours, 41%)
          <span className="ml-[49px]">Transitions: 7</span>
        </div>
        <span className="absolute top-[115px] right-0 h-[650px] w-3 rounded-full bg-gradient-to-b from-[#41445a] to-[#464649]" />
        <span className="absolute top-[472px] right-12 h-[35px] w-3 rounded-t-full bg-[#424455]" />
        <span className="absolute top-[507px] right-[38px] size-2.5 border-r-4 border-b-4 border-[#58585a]" />
      </div>
    </Card>
  );
}

/* ---------- page ---------- */

export default function App() {
  return (
    <div className="flex h-[1856px] w-[3222px] overflow-hidden bg-[#383c45] font-[Roboto,sans-serif] leading-normal">
      <Sidebar />
      <main className="flex grow flex-col">
        <header className="flex h-[218px] flex-col justify-between bg-[#5294e2] text-white">
          <div className="flex h-[116px] items-center justify-between pr-12 pl-[158px] text-[40px]">
            <span className="pt-px">Home</span>
            <Icon d={P.dots} />
          </div>
          <div className="flex h-24 pl-[134px]">
            <div className="flex w-24 items-center justify-center border-b-4 border-white pt-1">
              <Icon d={P.hass} />
            </div>
            <div className="flex w-[110px] items-center justify-center opacity-80">
              <svg viewBox="0 0 24 24" className="size-12 fill-current">
                <path
                  fillRule="evenodd"
                  d="M5.500,2H18.500A1.500,1.500 0 0,1 20,3.500V12.500A1.500,1.500 0 0,1 18.500,14H5.500A1.500,1.500 0 0,1 4,12.500V3.500A1.500,1.500 0 0,1 5.500,2M6,4V12H18V4H6M4,15H20A2,2 0 0,1 22,17V20A2,2 0 0,1 20,22H4A2,2 0 0,1 2,20V17A2,2 0 0,1 4,15M8,17V20H20V17H8M9,18H13V19.200H9V18M15,18H19V19.200H15V18Z"
                />
              </svg>
            </div>
          </div>
        </header>
        <div className="flex items-start gap-4 pt-4 pl-[14px]">
          <div className="flex flex-col gap-4">
            <MediaCard />
            <VacuumCard />
            <MapCard />
          </div>
          <div className="flex flex-col gap-4">
            <WeatherCard />
            <ClimateCard />
          </div>
          <div className="flex flex-col gap-4">
            <SensorsCard />
            <GraphCard />
          </div>
        </div>
      </main>
    </div>
  );
}
